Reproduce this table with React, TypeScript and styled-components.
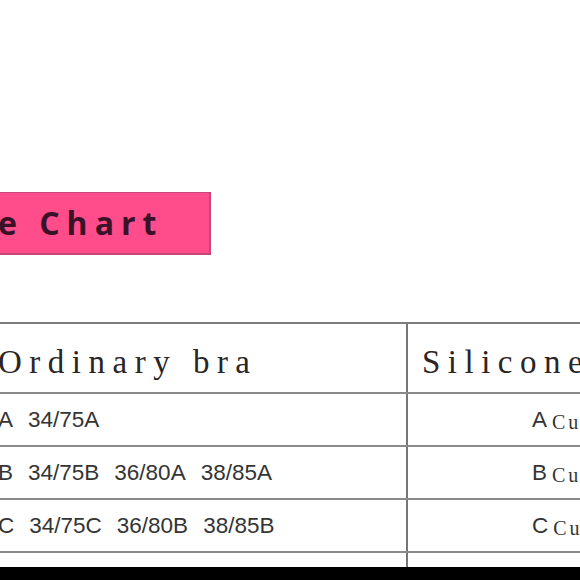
import React from 'react'
import styled, { createGlobalStyle } from 'styled-components'

const GlobalStyle = createGlobalStyle`
  html, body {
    margin: 0;
    padding: 0;
    background: #ffffff;
    overflow: hidden;
  }
`

const rows = [
  { cup: 'A', sizes: ['34/75A'] },
  { cup: 'B', sizes: ['34/75B', '36/80A', '38/85A'] },
  { cup: 'C', sizes: ['34/75C', '36/80B', '38/85B'] },
]

export default function App() {
  return (
    <Page>
      <GlobalStyle />
      <Banner>
        <BannerText>Size Chart</BannerText>
      </Banner>
      <Table>
        <HeadRow>
          <LeftCell>
            <HeadText $indent={-2}>Ordinary bra</HeadText>
          </LeftCell>
          <RightCell>
            <HeadText $indent={14}>Silicone bra</HeadText>
          </RightCell>
        </HeadRow>
        {rows.map((r) => (
          <BodyRow key={r.cup}>
            <LeftCell>
              <Sizes>
                <Size>{r.cup}</Size>
                {r.sizes.map((s) => (
                  <Size key={s}>{s}</Size>
                ))}
              </Sizes>
            </LeftCell>
            <RightCell>
              <CupLabel>
                <CupLetter>{r.cup}</CupLetter>
                <CupWord>Cup size</CupWord>
              </CupLabel>
            </RightCell>
          </BodyRow>
        ))}
        <TailRow>
          <LeftCell />
          <RightCell />
        </TailRow>
      </Table>
      <BlackBar />
    </Page>
  )
}

const Page = styled.div`
  width: 580px;
  height: 580px;
  overflow: hidden;
  display: flex;
  flex-direction: column;
  background: #ffffff;
`

const Banner = styled.div`
  margin-top: 192px;
  width: 211px;
  height: 63px;
  flex-shrink: 0;
  box-sizing: border-box;
  background: #ff4c8b;
  border: 1px solid #c8457a;
  border-left: none;
  border-right-width: 2px;
  border-bottom-width: 2px;
  overflow: hidden;
  display: flex;
  align-items: center;
`

const BannerText = styled.span`
  font-family: 'Open Sans', 'Liberation Sans', sans-serif;
  font-weight: 700;
  font-size: 32px;
  letter-spacing: 7px;
  color: #3a1228;
  white-space: nowrap;
  margin-left: -66px;
  margin-top: -1px;
`

const Table = styled.div`
  margin-top: 67px;
  border-top: 2px solid #7c7c7c;
  display: flex;
  flex-direction: column;
`

const Row = styled.div`
  display: grid;
  grid-template-columns: 408px 1fr;
  border-bottom: 2px solid #8a8a8a;
  box-sizing: border-box;
  flex-shrink: 0;
`

const HeadRow = styled(Row)`
  height: 70px;
`

const BodyRow = styled(Row)`
  height: 53px;
`

const TailRow = styled(Row)`
  height: 14px;
  border-bottom: none;
`

const LeftCell = styled.div`
  border-right: 2px solid #767676;
  display: flex;
  align-items: center;
  overflow: hidden;
  min-width: 0;
`

const RightCell = styled.div`
  display: flex;
  align-items: center;
  overflow: hidden;
  min-width: 0;
`

const HeadText = styled.span<{ $indent: number }>`
  font-family: 'Liberation Serif', 'DejaVu Serif', serif;
  font-size: 33px;
  letter-spacing: 7.5px;
  color: #2b2525;
  white-space: nowrap;
  margin-left: ${(p) => p.$indent}px;
  margin-top: 8px;
`

const Sizes = styled.div`
  display: flex;
  gap: 15px;
  margin-left: -2px;
`

const Size = styled.span`
  font-family: 'Liberation Sans', 'Noto Sans', sans-serif;
  font-size: 22.5px;
  color: #343434;
  white-space: nowrap;
`

const CupLabel = styled.div`
  display: flex;
  align-items: baseline;
  gap: 5px;
  margin-left: 124px;
  white-space: nowrap;
`

const CupLetter = styled.span`
  font-family: 'Liberation Sans', 'Noto Sans', sans-serif;
  font-size: 22.5px;
  color: #343434;
`

const CupWord = styled.span`
  font-family: 'Liberation Serif', serif;
  font-size: 20px;
  letter-spacing: 3px;
  color: #343434;
  position: relative;
  top: 2px;
`

const BlackBar = styled.div`
  height: 13px;
  background: #000000;
  flex-shrink: 0;
`
